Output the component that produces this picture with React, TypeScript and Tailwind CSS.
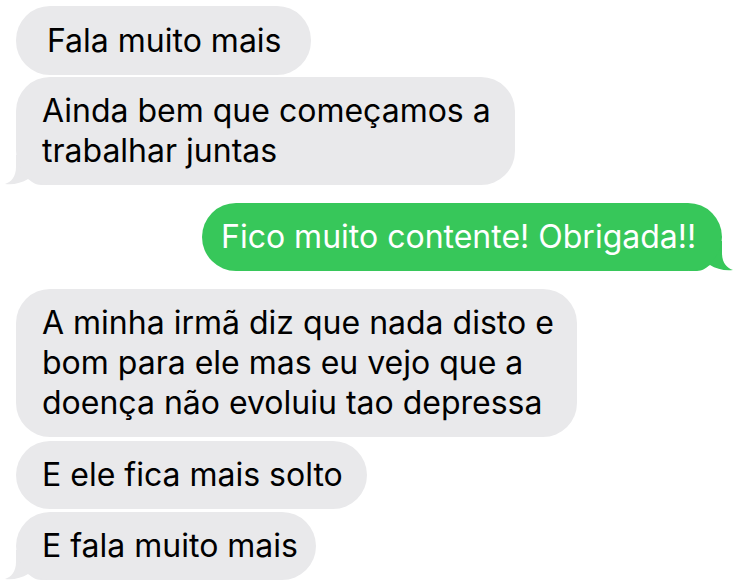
import React from "react";

const GRAY = "#e9e9eb";
const GREEN = "#37c75a";

function LeftTail() {
  return (
    <svg
      className="absolute left-[-11px] bottom-0"
      width="44"
      height="30"
      viewBox="0 0 44 30"
    >
      <path
        d="M11 0 L11 12 C11 22 6 27 0 29 C8 30 17 28 23 24 C27 27 31 30 36 30 L44 30 L44 0 Z"
        fill={GRAY}
      />
    </svg>
  );
}

function RightTail() {
  return (
    <svg
      className="absolute right-[-11px] bottom-0"
      width="44"
      height="30"
      viewBox="0 0 44 30"
    >
      <path
        d="M33 0 L33 12 C33 22 38 27 44 29 C36 30 27 28 21 24 C17 27 13 30 8 30 L0 30 L0 0 Z"
        fill={GREEN}
      />
    </svg>
  );
}

function Gray({
  children,
  w,
  pl,
  tail,
  mt,
}: {
  children: React.ReactNode;
  w: string;
  pl: string;
  tail?: boolean;
  mt: string;
}) {
  return (
    <div className={`relative ml-[16px] ${mt} ${w}`}>
      {tail && <LeftTail />}
      <div
        className={`relative rounded-[34px] bg-[#e9e9eb] py-[14px] ${pl} text-black whitespace-nowrap`}
      >
        {children}
      </div>
    </div>
  );
}

export default function App() {
  return (
    <div
      className="w-[743px] h-[586px] bg-white overflow-hidden flex flex-col text-[32px] leading-[40px]"
      style={{ fontFamily: "Inter, 'Liberation Sans', sans-serif" }}
    >
      <div className="relative ml-[16px] mt-[6px] w-[295px]">
        <div className="rounded-[34px] bg-[#e9e9eb] pt-[15px] pb-[14px] pl-[31px] text-black whitespace-nowrap">
          Fala muito mais
        </div>
      </div>
      <Gray w="w-[499px]" pl="pl-[26px]" tail mt="mt-[2px]">
        Ainda bem que começamos a
        <br />
        trabalhar juntas
      </Gray>
      <div className="relative mt-[18px] mr-[21px] self-end w-[520px]">
        <RightTail />
        <div className="relative rounded-[34px] bg-[#37c75a] py-[14px] pl-[19px] text-white whitespace-nowrap">
          Fico muito contente! Obrigada!!
        </div>
      </div>
      <Gray w="w-[561px]" pl="pl-[26px]" mt="mt-[18px]">
        A minha irmã diz que nada disto e
        <br />
        bom para ele mas eu vejo que a
        <br />
        doença não evoluiu tao depressa
      </Gray>
      <Gray w="w-[351px]" pl="pl-[26px]" mt="mt-[4px]">
        E ele fica mais solto
      </Gray>
      <Gray w="w-[300px]" pl="pl-[26px]" tail mt="mt-[3px]">
        E fala muito mais
      </Gray>
    </div>
  );
}
